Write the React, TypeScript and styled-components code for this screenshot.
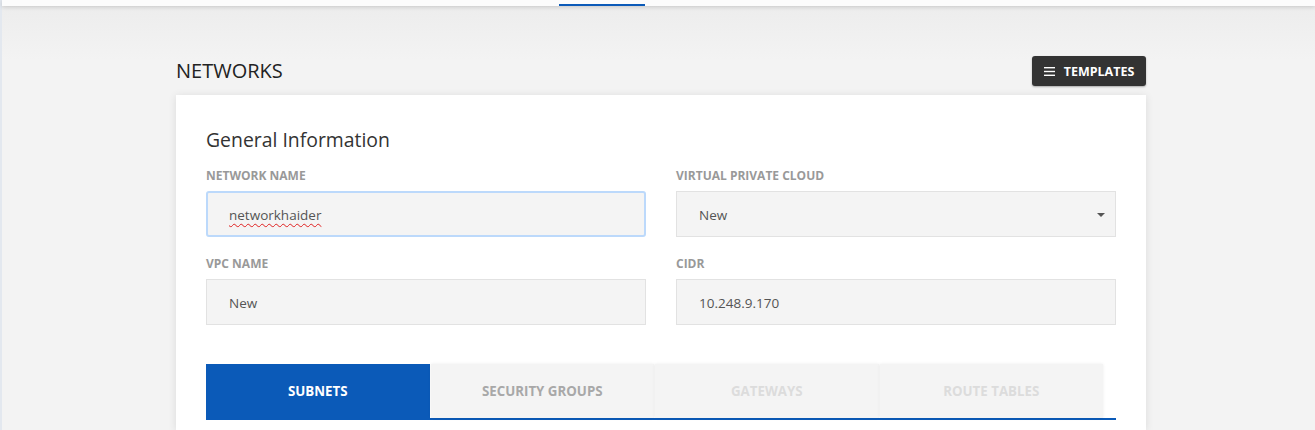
import React from "react";
import styled, { createGlobalStyle } from "styled-components";

const Global = createGlobalStyle`
  html, body { margin: 0; padding: 0; }
  body {
    background: #f3f3f3;
    font-family: "Open Sans", "Noto Sans", sans-serif;
    color: #333;
  }
`;

const Page = styled.div`
  min-height: 430px;
  background: linear-gradient(#ececec 0px, #f3f3f3 60px);
  border-left: 2px solid #e3e8ef;
  box-sizing: border-box;
`;

const TopBar = styled.div`
  height: 6px;
  background: #fcfcfc;
  box-shadow: 0 1px 4px rgba(0, 0, 0, 0.16);
  display: flex;
  align-items: flex-end;
  padding-left: 557px;
`;

const NavIndicator = styled.div`
  width: 86px;
  height: 2px;
  background: #0b5ab8;
`;

const Main = styled.div`
  width: 970px;
  margin-left: 174px;
  padding-top: 50px;
`;

const HeaderRow = styled.div`
  display: flex;
  justify-content: space-between;
  align-items: center;
  height: 30px;
  margin-bottom: 9px;
`;

const Title = styled.h1`
  margin: 0;
  font-size: 20px;
  font-weight: 400;
  color: #222;
  position: relative;
  top: -1px;
`;

const TemplatesButton = styled.button`
  display: flex;
  align-items: center;
  gap: 9px;
  height: 30px;
  width: 114px;
  justify-content: center;
  border: none;
  border-radius: 3px;
  background: #333;
  color: #fff;
  font-family: "Open Sans", sans-serif;
  font-weight: 700;
  font-size: 12.5px;
  box-shadow: 0 1px 2px rgba(0, 0, 0, 0.3);
  padding: 0 8px;
`;

const Card = styled.div`
  background: #fff;
  box-shadow: 0 1px 8px rgba(0, 0, 0, 0.1);
  padding: 31px 30px 0;
  height: 335px;
  box-sizing: border-box;
`;

const SectionTitle = styled.h2`
  margin: 0 0 14px;
  font-size: 19.4px;
  font-weight: 400;
  color: #333;
  line-height: 28px;
`;

const Grid = styled.div`
  display: grid;
  grid-template-columns: 440px 440px;
  column-gap: 30px;
  row-gap: 19px;
`;

const Field = styled.div`
  display: flex;
  flex-direction: column;
`;

const Label = styled.label`
  font-size: 12px;
  font-weight: 700;
  color: #999;
  line-height: 16px;
  margin-bottom: 7px;
`;

const InputBox = styled.div<{ $focused?: boolean }>`
  box-sizing: border-box;
  height: 46px;
  background: #f4f4f4;
  border: ${(p) => (p.$focused ? "2px solid #bcd9fb" : "1px solid #e2e2e2")};
  border-radius: ${(p) => (p.$focused ? "3px" : "0")};
  display: flex;
  align-items: center;
  justify-content: space-between;
  padding: 1px 10px 0 ${(p) => (p.$focused ? 21 : 22)}px;
  font-size: 13.5px;
  color: #555;
`;

const Spell = styled.span`
  text-decoration: underline wavy #e02020;
  text-decoration-thickness: 1px;
  text-underline-offset: 3px;
`;

const Caret = styled.span`
  width: 0;
  height: 0;
  border-left: 4px solid transparent;
  border-right: 4px solid transparent;
  border-top: 4px solid #555;
`;

const Tabs = styled.div`
  margin-top: 39px;
  width: 910px;
  display: flex;
  gap: 1px;
  border-bottom: 2px solid #0b5ab8;
  padding-right: 13px;
  box-sizing: border-box;
`;

const Tab = styled.div<{ $state: "active" | "normal" | "disabled" }>`
  flex: 1;
  height: 54px;
  display: flex;
  align-items: center;
  justify-content: center;
  font-size: 13.3px;
  font-weight: 700;
  background: ${(p) => (p.$state === "active" ? "#0b5ab8" : "#f4f4f4")};
  color: ${(p) =>
    p.$state === "active" ? "#fff" : p.$state === "normal" ? "#a8a8a8" : "#dcdcdc"};
  box-shadow: ${(p) => (p.$state === "active" ? "none" : "0 0 3px rgba(0,0,0,0.08)")};
`;

const MenuIcon = () => (
  <svg width="11" height="9" viewBox="0 0 11 9">
    <rect x="0" y="0" width="11" height="1.4" fill="#fff" />
    <rect x="0" y="3.8" width="11" height="1.4" fill="#fff" />
    <rect x="0" y="7.6" width="11" height="1.4" fill="#fff" />
  </svg>
);

export default function App() {
  return (
    <>
      <Global />
      <Page>
        <TopBar>
          <NavIndicator />
        </TopBar>
        <Main>
          <HeaderRow>
            <Title>NETWORKS</Title>
            <TemplatesButton>
              <MenuIcon />
              TEMPLATES
            </TemplatesButton>
          </HeaderRow>
          <Card>
            <SectionTitle>General Information</SectionTitle>
            <Grid>
              <Field>
                <Label>NETWORK NAME</Label>
                <InputBox $focused>
                  <Spell>networkhaider</Spell>
                </InputBox>
              </Field>
              <Field>
                <Label>VIRTUAL PRIVATE CLOUD</Label>
                <InputBox>
                  <span>New</span>
                  <Caret />
                </InputBox>
              </Field>
              <Field>
                <Label>VPC NAME</Label>
                <InputBox>
                  <span>New</span>
                </InputBox>
              </Field>
              <Field>
                <Label>CIDR</Label>
                <InputBox>
                  <span>10.248.9.170</span>
                </InputBox>
              </Field>
            </Grid>
            <Tabs>
              <Tab $state="active">SUBNETS</Tab>
              <Tab $state="normal">SECURITY GROUPS</Tab>
              <Tab $state="disabled">GATEWAYS</Tab>
              <Tab $state="disabled">ROUTE TABLES</Tab>
            </Tabs>
          </Card>
        </Main>
      </Page>
    </>
  );
}
